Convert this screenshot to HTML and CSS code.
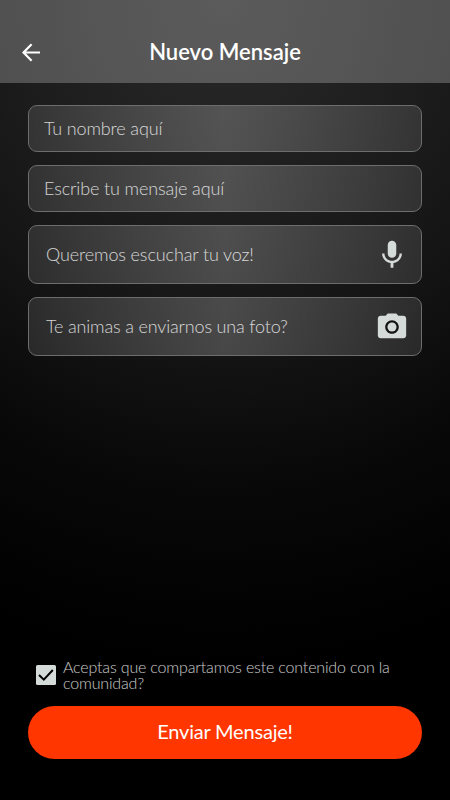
FILE: index.html
```html
<!DOCTYPE html>
<html lang="es">
<head>
<meta charset="utf-8">
<title>Nuevo Mensaje</title>
<link rel="stylesheet" href="styles.css">
</head>
<body>
<div class="screen">
  <header class="topbar">
    <svg class="back" viewBox="0 0 24 24"><path d="M13.600 4.200 5.500 12.500l8.100 8.300M5.700 12.500H22"/></svg>
    <h1 class="title"><span>Nuevo Mensaje</span></h1>
  </header>
  <main class="form">
    <div class="field"><span class="label name">Tu nombre aquí</span></div>
    <div class="field"><span class="label message">Escribe tu mensaje aquí</span></div>
    <div class="field media"><span class="label voice">Queremos escuchar tu voz!</span>
      <svg class="icon" viewBox="0 0 24 24"><path d="M12 14c1.66 0 3-1.34 3-3V5c0-1.66-1.34-3-3-3S9 3.340 9 5v6c0 1.660 1.340 3 3 3zm5.300-3c0 3-2.540 5.100-5.300 5.100S6.700 14 6.700 11H5c0 3.410 2.720 6.230 6 6.720V21h2v-3.280c3.280-.48 6-3.300 6-6.720h-1.700z"/></svg>
    </div>
    <div class="field media"><span class="label photo">Te animas a enviarnos una foto?</span>
      <svg class="icon camera" viewBox="0 0 24 24"><circle class="lens" cx="12" cy="12" r="5.500"/><circle cx="12" cy="12" r="3.200"/><path d="M9 2.500 7.500 4H4c-1.100 0-2 .9-2 2v12c0 1.100.9 2 2 2h16c1.100 0 2-.9 2-2V6c0-1.100-.9-2-2-2h-3.500L15 2.500H9zm3 14.300c-2.650 0-4.800-2.150-4.800-4.800s2.150-4.800 4.800-4.800 4.800 2.150 4.800 4.800-2.150 4.800-4.800 4.800z"/></svg>
    </div>
  </main>
  <footer class="actions">
    <div class="consent">
      <svg class="check" viewBox="0 0 20 20"><rect width="20" height="20" rx="1.500"/><path d="m3 10 4.800 4.600L16.800 5"/></svg>
      <p class="terms">Aceptas que compartamos este contenido con la comunidad?</p>
    </div>
    <button class="send" type="button"><span>Enviar Mensaje!</span></button>
  </footer>
</div>
</body>
</html>
```
FILE: styles.css
```css
* { box-sizing: border-box; }
body { margin: 0; background: #000; font-family: Lato, "Open Sans", sans-serif; }
.screen {
  width: 450px; height: 800px; display: flex; flex-direction: column;
  background: radial-gradient(ellipse 600px 660px at 50% 0, #292929 0%, #232323 18%, #1b1b1b 38%, #141414 53%, #080808 74%, #000 100%);
}
.topbar {
  height: 83px; padding: 22px 18px 2px; display: grid; grid-template-columns: 26px 1fr 26px;
  align-items: center; background: rgba(255, 255, 255, .235); flex: none;
}
.back { width: 24px; height: 24px; fill: none; stroke: #fff; stroke-width: 2.2; }
.title { margin: 0; color: #fff; font-size: 22px; font-weight: 600; line-height: 28px; text-align: center; white-space: nowrap; }
.form { display: flex; flex-direction: column; gap: 13px; padding: 22px 28px 0; }
.field {
  height: 47px; display: flex; align-items: center; justify-content: space-between;
  padding: 0 14px 2px 15px; border: 1px solid #6a6f6d; border-radius: 9px;
  background: linear-gradient(90deg, rgba(255, 255, 255, .11), rgba(255, 255, 255, .22) 50%, rgba(255, 255, 255, .11));
}
.media { height: 59px; padding: 0 12px 2px 17px; }
.label { color: #fff; opacity: .78; font-size: 18px; font-weight: 300; line-height: 24px; white-space: nowrap; letter-spacing: -.12px; }
.photo { letter-spacing: -.16px; }
.icon { width: 34px; height: 34px; margin-top: 2px; fill: #d5dbd9; }
.camera .lens { fill: #141414; }
.actions { margin-top: auto; padding: 0 28px 41px; }
.consent { display: flex; align-items: flex-start; gap: 7px; padding: 0 8px; height: 47px; }
.check { width: 20px; height: 20px; margin-top: 6px; fill: #d5dbd9; flex: none; }
.check path { fill: none; stroke: #000; stroke-width: 2; }
.terms { margin: 0; color: #fff; opacity: .78; font-size: 16px; font-weight: 300; line-height: 16px; letter-spacing: -.17px; }
.send {
  display: flex; align-items: center; justify-content: center; width: 100%; height: 53px; padding: 0 0 3px;
  border: 0; border-radius: 27px; background: #ff3600; color: #fff; font: 400 20px/24px Lato, sans-serif; letter-spacing: -.2px;
}
```
